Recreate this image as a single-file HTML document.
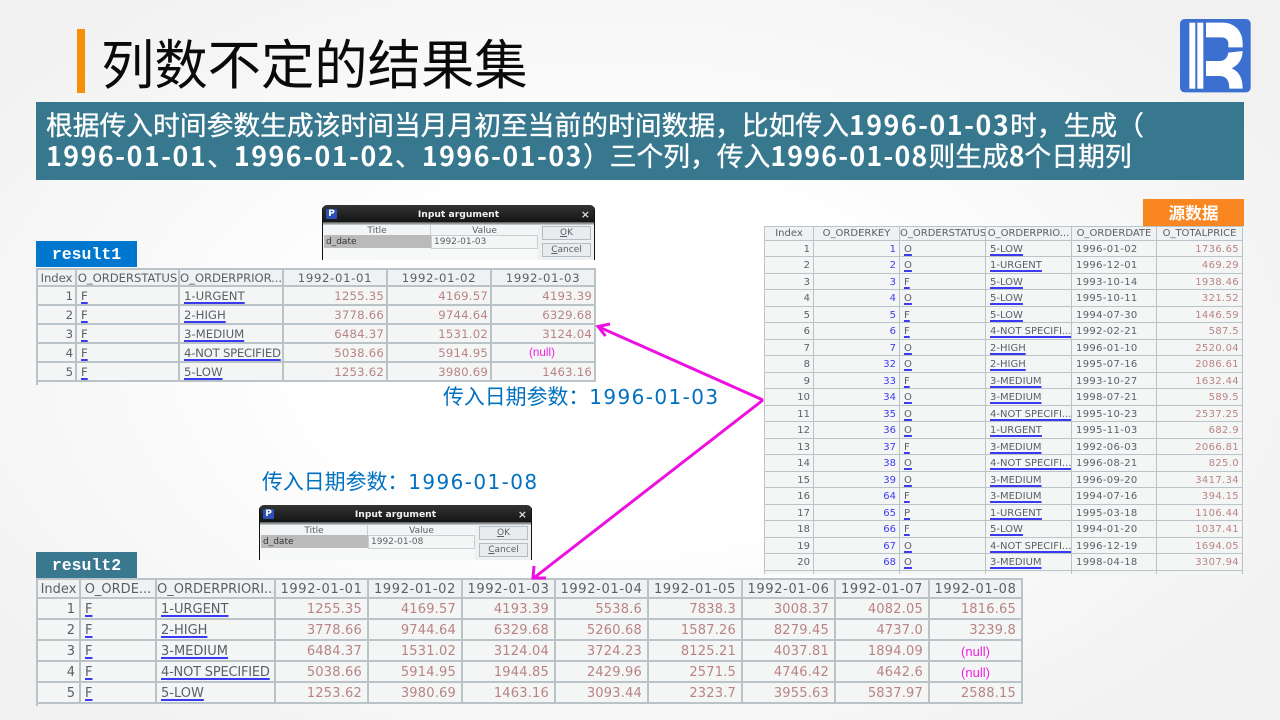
<!DOCTYPE html>
<html lang="zh"><head><meta charset="utf-8"><title>列数不定的结果集</title>
<style>
html,body{margin:0;padding:0}
body{width:1280px;height:720px;overflow:hidden;position:relative;background:radial-gradient(ellipse 800px 480px at 48% 50%,#fff 35%,#f1f1f1 100%);font-family:"Liberation Sans","Noto Sans CJK SC",sans-serif}
.a{position:absolute;white-space:nowrap}
.ban{color:#fff;font-size:26.77px;font-weight:400;-webkit-text-stroke:.35px #fff;line-height:32px;font-family:"Noto Sans CJK SC",sans-serif;left:46px}
.ban span{letter-spacing:1.5px;font-weight:700;-webkit-text-stroke:0}
.ban i{font-style:normal;font-weight:700;-webkit-text-stroke:0}
.tag{color:#fff;font:700 16.5px "Liberation Mono",monospace;text-align:center;width:101px;height:26px;line-height:27px;left:36px}
.param{color:#0070c0;font-size:20.9px;line-height:28px;font-family:"Noto Sans CJK SC",sans-serif}
.param b{font:400 20px "DejaVu Sans",sans-serif;letter-spacing:1.4px}
table{position:absolute;border-spacing:0;table-layout:fixed;border-left:2px solid #bac3c8;border-top:2px solid #bac3c8;font-family:"DejaVu Sans",sans-serif;color:#5a6068;background:#f4f6f6;filter:blur(.35px)}
td,th{border-right:2px solid #bac3c8;border-bottom:2px solid #bac3c8;padding:0 2px 0 4px;font-weight:400;overflow:hidden;white-space:nowrap;box-sizing:border-box;text-align:left}
th{text-align:center;background:#eff1f2;padding:0}
td.r{text-align:right}
td.n{text-align:right;color:#b98383}
td.k{text-align:right;color:#3c3cf0}
td.d{letter-spacing:.45px}
td.x{color:#f020e0;text-align:center;font-family:"Liberation Sans",sans-serif}
u{text-decoration-color:#3a3af0;text-decoration-thickness:1.5px;text-underline-offset:2px}
#t1{left:36px;top:268px;font-size:11.7px}
#t1 th{letter-spacing:-.1px}
#t1 th.d,#t2 th.d{letter-spacing:.65px}
#t1 td.n{letter-spacing:.2px}
#t2{left:36px;top:578px;font-size:13px}
#t2 td{padding-top:2px;padding-right:4px}
#t2 th{padding-top:2px}
#t2 td.n{letter-spacing:.2px;padding-right:5px}
#t3{left:764px;top:226px;font-size:10px}
#t3 th,#t3 td{border-width:0 1.5px 1.5px 0}
#t3 td{padding-top:1px;padding-right:3px}
#t3{border-width:1.5px 0 0 1.5px}
#t3 td.d,#t3 td.n{letter-spacing:.35px}
.dlg{width:273px;height:55px;background:#f7f8f8;overflow:hidden;border-radius:5px 5px 0 0;font-family:"DejaVu Sans",sans-serif;filter:blur(.3px)}
.dlg .bar{position:absolute;left:0;top:0;width:273px;height:17px;background:linear-gradient(#333,#151515);color:#f2f2f2;text-align:center;font:700 9.2px/20px "DejaVu Sans",sans-serif;overflow:hidden}
.dlg .bar2{position:absolute;left:0;top:17px;width:273px;height:3px;background:linear-gradient(#555,#cfd6da)}
.dlg .sl{position:absolute;top:0;width:1px;height:55px;background:#111}
.dlg .p{position:absolute;left:4px;top:4px;width:11px;height:10px;background:#2c50b8;color:#fff;font:700 9px/10px "DejaVu Sans",sans-serif;text-align:center;border-radius:1px}
.dlg .c{position:absolute;right:5px;top:1px;color:#ddd;font:700 11px/18px "DejaVu Sans",sans-serif}
.dlg div.f{position:absolute;font-size:9px;line-height:15px;color:#5a6068;white-space:nowrap;box-sizing:border-box}
.dlg .btn{left:220px;width:49px;height:14px;border:1px solid #b6bdc2;background:#e9ecee;text-align:center;line-height:12px!important}
.dlg .pn{position:absolute;left:216px;top:20px;width:56px;height:35px;background:#eef0f1}
.dlg u{text-decoration-color:#5a6068;text-decoration-thickness:1px;text-underline-offset:1px}
</style></head><body>

<div class="a" style="left:77px;top:29px;width:8px;height:64px;background:#f79008"></div>
<div class="a" style="left:101px;top:18px;font-size:53.33px;line-height:88px;color:#0a0a0a;font-family:'Noto Sans CJK SC',sans-serif">列数不定的结果集</div>

<svg class="a" style="left:1160px;top:0" width="120" height="110" viewBox="0 0 360 330">
<rect x="60" y="57" width="212" height="220" rx="14" fill="#3b6fd0"/>
<rect x="88" y="68" width="18" height="198" fill="#fff"/><rect x="112" y="68" width="18" height="198" fill="#fff"/>
<path fill="#fff" d="M138 68H188C225 68 248 95 248 130V142H205V130C205 120 197 112 185 112H138Z"/>
<path fill="#fff" d="M138 183H180C195 183 203 172 205 158L248 153C247 178 236 195 215 205C238 215 248 235 248 266H208C208 240 198 228 178 228H138Z"/>
</svg>

<div class="a" style="left:36px;top:102px;width:1208px;height:78px;background:#38788f"></div>
<div class="a ban" style="top:108px">根据传入时间参数生成该时间当月月初至当前的时间数据，比如传入<span>1996-01-03</span>时，生成（</div>
<div class="a ban" style="top:139px"><span>1996-01-01</span>、<span>1996-01-02</span>、<span>1996-01-03</span>）三个列，传入<span style="letter-spacing:1.2px">1996-01-08</span>则生成<i>8</i>个日期列</div>

<div class="a tag" style="top:241px;background:#0077cf">result1</div>
<div class="a tag" style="top:552px;background:#3a7890">result2</div>
<div class="a" style="left:1143px;top:199px;width:101px;height:27px;background:#f98620;color:#fff;font:700 16.67px/27px 'Noto Sans CJK SC',sans-serif;text-align:center">源数据</div>

<div class="a param" style="left:443px;top:382px">传入日期参数：<b>1996-01-03</b></div>
<div class="a param" style="left:262px;top:467px">传入日期参数：<b>1996-01-08</b></div>

<div class="a dlg" style="left:322px;top:205px">
<div class="pn"></div><div class="bar">Input argument</div><div class="bar2"></div><div class="p">P</div><div class="c">×</div>
<div class="sl" style="left:0"></div><div class="sl" style="left:272px"></div>
<div class="f" style="left:2px;top:20px;width:107px;height:10px;line-height:12px;text-align:center;border-right:1px solid #c8ced2;background:#f2f4f5">Title</div>
<div class="f" style="left:109px;top:20px;width:107px;height:10px;line-height:12px;text-align:center;background:#f2f4f5">Value</div>
<div class="f" style="left:2px;top:30px;width:107px;height:13px;background:#bababa;color:#333;padding-left:2px">d_date</div>
<div class="f" style="left:109px;top:30px;width:107px;height:14px;background:#f4f6f6;border:1px solid #c8ced2;padding-left:2px;line-height:12px">1992-01-03</div>
<div class="f btn" style="top:21px"><u>O</u>K</div>
<div class="f btn" style="top:38px"><u>C</u>ancel</div>
</div>

<div class="a dlg" style="left:259px;top:505px">
<div class="pn"></div><div class="bar">Input argument</div><div class="bar2"></div><div class="p">P</div><div class="c">×</div>
<div class="sl" style="left:0"></div><div class="sl" style="left:272px"></div>
<div class="f" style="left:2px;top:20px;width:107px;height:10px;line-height:12px;text-align:center;border-right:1px solid #c8ced2;background:#f2f4f5">Title</div>
<div class="f" style="left:109px;top:20px;width:107px;height:10px;line-height:12px;text-align:center;background:#f2f4f5">Value</div>
<div class="f" style="left:2px;top:30px;width:107px;height:13px;background:#bababa;color:#333;padding-left:2px">d_date</div>
<div class="f" style="left:109px;top:30px;width:107px;height:14px;background:#f4f6f6;border:1px solid #c8ced2;padding-left:2px;line-height:12px">1992-01-08</div>
<div class="f btn" style="top:21px"><u>O</u>K</div>
<div class="f btn" style="top:38px"><u>C</u>ancel</div>
</div>

<table id="t1" style="width:560px">
<colgroup><col style="width:39px"><col style="width:103px"><col style="width:104px"><col style="width:104px"><col style="width:104px"><col style="width:104px"></colgroup>
<tr style="height:17px"><th>Index</th><th>O_ORDERSTATUS</th><th>O_ORDERPRIOR...</th><th class="d">1992-01-01</th><th class="d">1992-01-02</th><th class="d">1992-01-03</th></tr>
<tr style="height:19px"><td class="r">1</td><td><u>F</u></td><td><u>1-URGENT</u></td><td class="n">1255.35</td><td class="n">4169.57</td><td class="n">4193.39</td></tr>
<tr style="height:19px"><td class="r">2</td><td><u>F</u></td><td><u>2-HIGH</u></td><td class="n">3778.66</td><td class="n">9744.64</td><td class="n">6329.68</td></tr>
<tr style="height:19px"><td class="r">3</td><td><u>F</u></td><td><u>3-MEDIUM</u></td><td class="n">6484.37</td><td class="n">1531.02</td><td class="n">3124.04</td></tr>
<tr style="height:19px"><td class="r">4</td><td><u>F</u></td><td style="letter-spacing:-.25px"><u>4-NOT SPECIFIED</u></td><td class="n">5038.66</td><td class="n">5914.95</td><td class="x" style="padding-right:6px">(null)</td></tr>
<tr style="height:19px"><td class="r">5</td><td><u>F</u></td><td><u>5-LOW</u></td><td class="n">1253.62</td><td class="n">3980.69</td><td class="n">1463.16</td></tr>
</table>
<div class="a" style="left:36px;top:382px;width:2px;height:3px;background:#bac3c8"></div>

<table id="t2" style="width:987px">
<colgroup><col style="width:43px"><col style="width:76px"><col style="width:119px"><col style="width:93px"><col style="width:94px"><col style="width:93px"><col style="width:93px"><col style="width:94px"><col style="width:93px"><col style="width:94px"><col style="width:93px"></colgroup>
<tr style="height:18px"><th>Index</th><th>O_ORDE...</th><th>O_ORDERPRIORI...</th><th class="d">1992-01-01</th><th class="d">1992-01-02</th><th class="d">1992-01-03</th><th class="d">1992-01-04</th><th class="d">1992-01-05</th><th class="d">1992-01-06</th><th class="d">1992-01-07</th><th class="d">1992-01-08</th></tr>
<tr style="height:21px"><td class="r">1</td><td><u>F</u></td><td><u>1-URGENT</u></td><td class="n">1255.35</td><td class="n">4169.57</td><td class="n">4193.39</td><td class="n">5538.6</td><td class="n">7838.3</td><td class="n">3008.37</td><td class="n">4082.05</td><td class="n">1816.65</td></tr>
<tr style="height:21px"><td class="r">2</td><td><u>F</u></td><td><u>2-HIGH</u></td><td class="n">3778.66</td><td class="n">9744.64</td><td class="n">6329.68</td><td class="n">5260.68</td><td class="n">1587.26</td><td class="n">8279.45</td><td class="n">4737.0</td><td class="n">3239.8</td></tr>
<tr style="height:21px"><td class="r">3</td><td><u>F</u></td><td><u>3-MEDIUM</u></td><td class="n">6484.37</td><td class="n">1531.02</td><td class="n">3124.04</td><td class="n">3724.23</td><td class="n">8125.21</td><td class="n">4037.81</td><td class="n">1894.09</td><td class="x">(null)</td></tr>
<tr style="height:21px"><td class="r">4</td><td><u>F</u></td><td style="letter-spacing:-.2px"><u>4-NOT SPECIFIED</u></td><td class="n">5038.66</td><td class="n">5914.95</td><td class="n">1944.85</td><td class="n">2429.96</td><td class="n">2571.5</td><td class="n">4746.42</td><td class="n">4642.6</td><td class="x">(null)</td></tr>
<tr style="height:21px"><td class="r">5</td><td><u>F</u></td><td><u>5-LOW</u></td><td class="n">1253.62</td><td class="n">3980.69</td><td class="n">1463.16</td><td class="n">3093.44</td><td class="n">2323.7</td><td class="n">3955.63</td><td class="n">5837.97</td><td class="n">2588.15</td></tr>
</table>
<div class="a" style="left:36px;top:703px;width:2px;height:3px;background:#bac3c8"></div>

<table id="t3" style="width:479px">
<colgroup><col style="width:49px"><col style="width:86px"><col style="width:86px"><col style="width:86px"><col style="width:85px"><col style="width:86px"></colgroup>
<tr style="height:14px"><th>Index</th><th>O_ORDERKEY</th><th>O_ORDERSTATUS</th><th>O_ORDERPRIO...</th><th>O_ORDERDATE</th><th>O_TOTALPRICE</th></tr>
<tr style="height:16px"><td class="r">1</td><td class="k">1</td><td><u>O</u></td><td><u>5-LOW</u></td><td class="d">1996-01-02</td><td class="n">1736.65</td></tr>
<tr style="height:17px"><td class="r">2</td><td class="k">2</td><td><u>O</u></td><td><u>1-URGENT</u></td><td class="d">1996-12-01</td><td class="n">469.29</td></tr>
<tr style="height:16px"><td class="r">3</td><td class="k">3</td><td><u>F</u></td><td><u>5-LOW</u></td><td class="d">1993-10-14</td><td class="n">1938.46</td></tr>
<tr style="height:17px"><td class="r">4</td><td class="k">4</td><td><u>O</u></td><td><u>5-LOW</u></td><td class="d">1995-10-11</td><td class="n">321.52</td></tr>
<tr style="height:16px"><td class="r">5</td><td class="k">5</td><td><u>F</u></td><td><u>5-LOW</u></td><td class="d">1994-07-30</td><td class="n">1446.59</td></tr>
<tr style="height:17px"><td class="r">6</td><td class="k">6</td><td><u>F</u></td><td><u>4-NOT SPECIFI...</u></td><td class="d">1992-02-21</td><td class="n">587.5</td></tr>
<tr style="height:16px"><td class="r">7</td><td class="k">7</td><td><u>O</u></td><td><u>2-HIGH</u></td><td class="d">1996-01-10</td><td class="n">2520.04</td></tr>
<tr style="height:17px"><td class="r">8</td><td class="k">32</td><td><u>O</u></td><td><u>2-HIGH</u></td><td class="d">1995-07-16</td><td class="n">2086.61</td></tr>
<tr style="height:16px"><td class="r">9</td><td class="k">33</td><td><u>F</u></td><td><u>3-MEDIUM</u></td><td class="d">1993-10-27</td><td class="n">1632.44</td></tr>
<tr style="height:17px"><td class="r">10</td><td class="k">34</td><td><u>O</u></td><td><u>3-MEDIUM</u></td><td class="d">1998-07-21</td><td class="n">589.5</td></tr>
<tr style="height:16px"><td class="r">11</td><td class="k">35</td><td><u>O</u></td><td><u>4-NOT SPECIFI...</u></td><td class="d">1995-10-23</td><td class="n">2537.25</td></tr>
<tr style="height:17px"><td class="r">12</td><td class="k">36</td><td><u>O</u></td><td><u>1-URGENT</u></td><td class="d">1995-11-03</td><td class="n">682.9</td></tr>
<tr style="height:16px"><td class="r">13</td><td class="k">37</td><td><u>F</u></td><td><u>3-MEDIUM</u></td><td class="d">1992-06-03</td><td class="n">2066.81</td></tr>
<tr style="height:17px"><td class="r">14</td><td class="k">38</td><td><u>O</u></td><td><u>4-NOT SPECIFI...</u></td><td class="d">1996-08-21</td><td class="n">825.0</td></tr>
<tr style="height:16px"><td class="r">15</td><td class="k">39</td><td><u>O</u></td><td><u>3-MEDIUM</u></td><td class="d">1996-09-20</td><td class="n">3417.34</td></tr>
<tr style="height:17px"><td class="r">16</td><td class="k">64</td><td><u>F</u></td><td><u>3-MEDIUM</u></td><td class="d">1994-07-16</td><td class="n">394.15</td></tr>
<tr style="height:16px"><td class="r">17</td><td class="k">65</td><td><u>P</u></td><td><u>1-URGENT</u></td><td class="d">1995-03-18</td><td class="n">1106.44</td></tr>
<tr style="height:17px"><td class="r">18</td><td class="k">66</td><td><u>F</u></td><td><u>5-LOW</u></td><td class="d">1994-01-20</td><td class="n">1037.41</td></tr>
<tr style="height:16px"><td class="r">19</td><td class="k">67</td><td><u>O</u></td><td><u>4-NOT SPECIFI...</u></td><td class="d">1996-12-19</td><td class="n">1694.05</td></tr>
<tr style="height:17px"><td class="r">20</td><td class="k">68</td><td><u>O</u></td><td><u>3-MEDIUM</u></td><td class="d">1998-04-18</td><td class="n">3307.94</td></tr>
<tr style="height:3px"><td style="border-bottom:0;padding:0"></td><td style="border-bottom:0;padding:0"></td><td style="border-bottom:0;padding:0"></td><td style="border-bottom:0;padding:0"></td><td style="border-bottom:0;padding:0"></td><td style="border-bottom:0;padding:0"></td></tr>
</table>

<svg class="a" style="left:0;top:0" width="1280" height="720" fill="none" stroke="#ee10e0" stroke-width="3">
<path d="M763 400L599 327"/><path d="M610 324L598 326.500L605.500 336"/>
<path d="M763 400L535 577"/><path d="M534 566L533 578L546 578"/>
</svg>
</body></html>
